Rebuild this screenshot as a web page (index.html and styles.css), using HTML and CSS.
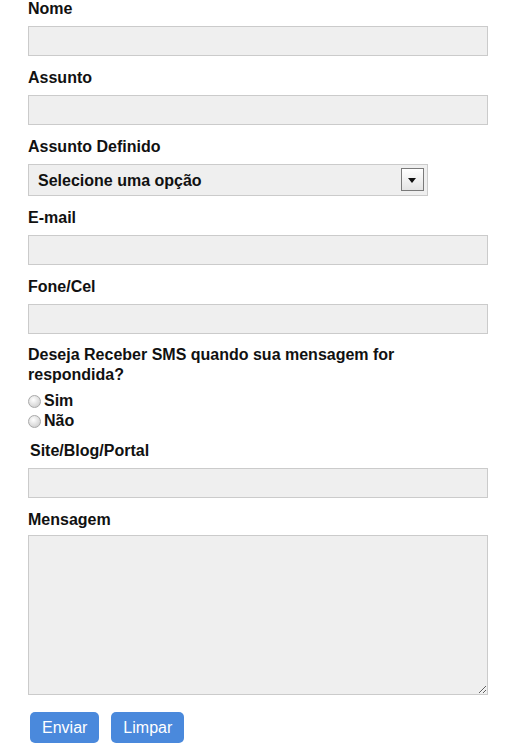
FILE: index.html
```html
<!DOCTYPE html>
<html lang="pt-BR">
<head>
    <meta charset="UTF-8">
    <meta name="viewport" content="width=device-width, initial-scale=1.0">
    <title>Contato</title>
    <link rel="stylesheet" href="styles.css">
</head>
<body>
    <form class="contact-form" onsubmit="event.preventDefault()">
        <label class="field-label" for="nome">Nome</label>
        <input type="text" id="nome" class="field-input">

        <label class="field-label" for="assunto">Assunto</label>
        <input type="text" id="assunto" class="field-input">

        <label class="field-label" for="assunto-definido">Assunto Definido</label>
        <div class="select-wrap">
            <select id="assunto-definido" class="field-select">
                <option value="">Selecione uma opção</option>
                <option value="duvida">Dúvida</option>
                <option value="sugestao">Sugestão</option>
                <option value="reclamacao">Reclamação</option>
            </select>
            <span class="select-arrow"></span>
        </div>

        <label class="field-label" for="email">E-mail</label>
        <input type="text" id="email" class="field-input">

        <label class="field-label" for="fone">Fone/Cel</label>
        <input type="text" id="fone" class="field-input">

        <p class="field-label question">Deseja Receber SMS quando sua mensagem for respondida?</p>
        <div class="radio-group">
            <label class="radio-row"><input type="radio" name="sms" value="sim"> Sim</label>
            <label class="radio-row"><input type="radio" name="sms" value="nao"> Não</label>
        </div>

        <label class="field-label site-label" for="site">Site/Blog/Portal</label>
        <input type="text" id="site" class="field-input">

        <label class="field-label" for="mensagem">Mensagem</label>
        <textarea id="mensagem" class="field-textarea"></textarea>

        <div class="actions">
            <button type="submit" class="btn">Enviar</button>
            <button type="reset" class="btn">Limpar</button>
        </div>
    </form>
</body>
</html>
```

FILE: styles.css
```css
body {
    margin: 0;
    padding: 0;
    background: white;
    color: #111;
    font-family: "Liberation Sans", Arial, sans-serif;
}
.contact-form {
    display: flex;
    flex-direction: column;
    align-items: flex-start;
    padding-left: 28px;
    width: 460px;
}
.field-label {
    display: block;
    margin: 0 0 8px 0;
    font-size: 16px;
    font-weight: bold;
    line-height: 18px;
}
.field-input {
    box-sizing: border-box;
    width: 460px;
    height: 30px;
    margin: 0 0 13px 0;
    padding: 4px 8px;
    border: 1px solid #cbcbcb;
    background: #efefef;
    font-family: inherit;
    font-size: 16px;
    outline: none;
}
.select-wrap {
    position: relative;
    margin-bottom: 13px;
}
.field-select {
    box-sizing: border-box;
    width: 400px;
    height: 32px;
    padding: 0 40px 0 9px;
    border: 1px solid #cbcbcb;
    background: #efefef;
    color: #111;
    font-family: inherit;
    font-size: 16px;
    font-weight: bold;
    -webkit-appearance: none;
    appearance: none;
    outline: none;
}
.select-arrow {
    position: absolute;
    top: 4px;
    right: 4px;
    width: 21px;
    height: 21px;
    border: 1px solid #7a7a7a;
    background: linear-gradient(#ffffff, #e4e4e4);
    pointer-events: none;
}
.select-arrow::after {
    content: "";
    position: absolute;
    left: 6px;
    top: 9px;
    border-left: 4px solid transparent;
    border-right: 4px solid transparent;
    border-top: 5px solid #111;
}
.question {
    width: 400px;
    line-height: 20px;
    margin: -2px 0 6px 0;
}
.radio-group {
    display: flex;
    flex-direction: column;
    margin-bottom: 11px;
}
.radio-row {
    display: flex;
    align-items: center;
    gap: 2px;
    height: 20px;
    font-size: 16px;
    font-weight: bold;
}
.radio-row input {
    -webkit-appearance: none;
    appearance: none;
    width: 13px;
    height: 13px;
    margin: 0 1px 0 0;
    border: 1px solid #a9a9a9;
    border-radius: 50%;
    background: radial-gradient(circle at 40% 35%, #ffffff, #d6d6d6 70%, #c4c4c4);
}
.site-label {
    padding-left: 2px;
}
.field-textarea {
    box-sizing: border-box;
    width: 460px;
    height: 160px;
    margin: -2px 0 17px 0;
    padding: 6px 8px;
    border: 1px solid #cbcbcb;
    background: #efefef;
    font-family: inherit;
    font-size: 14px;
    outline: none;
}
.actions {
    display: flex;
    gap: 12px;
    padding-left: 2px;
}
.btn {
    height: 31px;
    padding: 0 12px;
    border: none;
    border-radius: 5px;
    background-color: #4a89dc;
    color: white;
    font-family: inherit;
    font-size: 16px;
    cursor: pointer;
}
```
